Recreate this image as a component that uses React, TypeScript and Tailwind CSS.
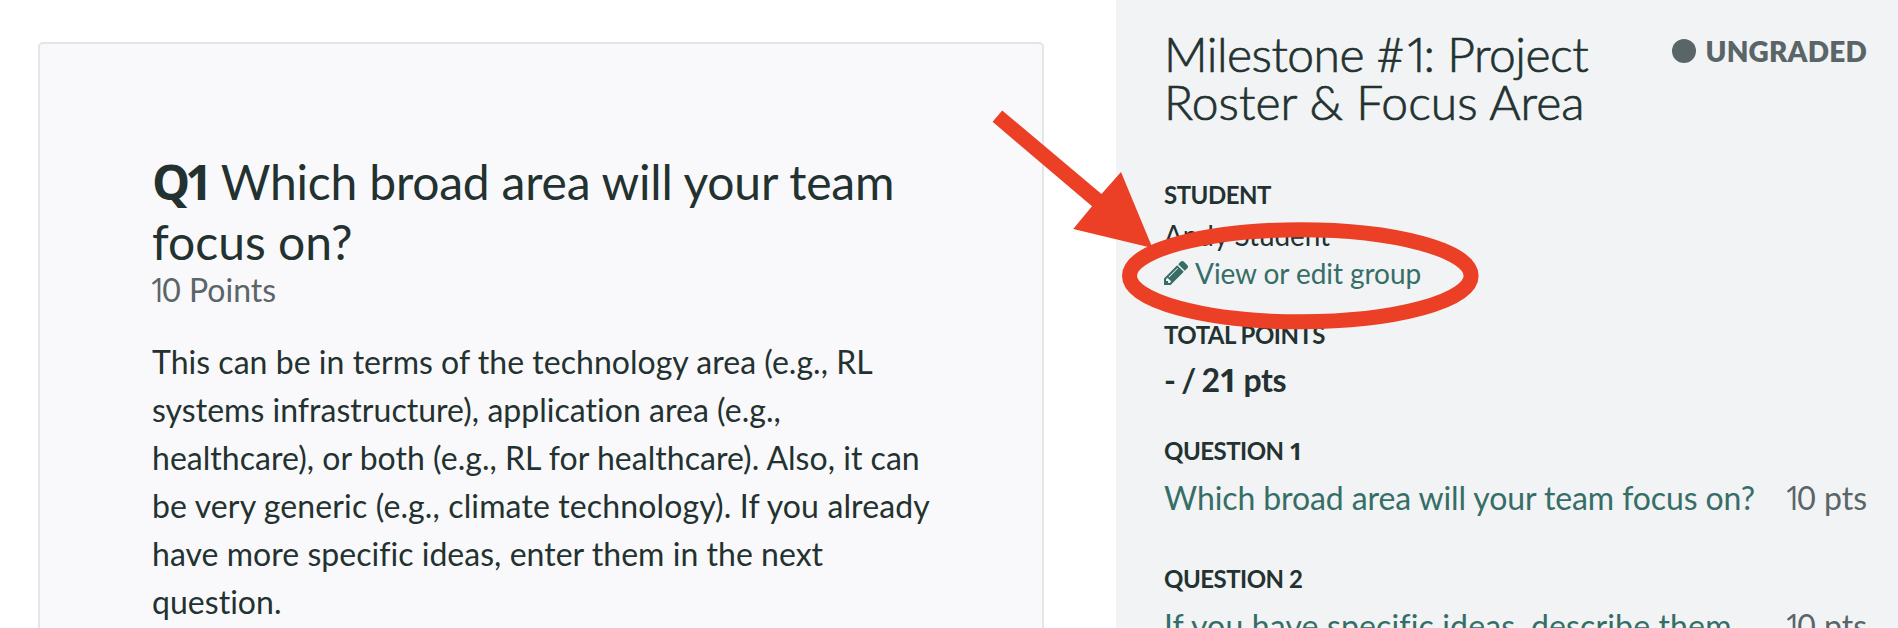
import type { ReactNode } from 'react';

function PencilIcon() {
  return (
    <svg viewBox="0 149 1515 1515" className="size-6 shrink-0" fill="currentColor" aria-hidden="true">
      <path d="M363 1536l91-91-235-235-91 91v107h128v128h107zM886 608q0-22-22-22-10 0-17 7l-542 542q-7 7-7 17 0 22 22 22 10 0 17-7l542-542q7-7 7-17zM832 416l416 416-832 832h-416v-416zM1515 512q0 53-37 90l-166 166-416-416 166-165q36-38 90-38 53 0 91 38l235 234q37 39 37 91z" />
    </svg>
  );
}

/* A footless, tightly set numeral one. */
function One({ className = 'tracking-[-0.16em]' }: { className?: string }) {
  return <span className={`font-['Open_Sans',sans-serif] leading-none ${className}`}>1</span>;
}

function Label({ children }: { children: ReactNode }) {
  return <h2 className="text-2xl leading-8 font-bold tracking-[-0.5px] uppercase">{children}</h2>;
}

function QuestionRow({ number, children }: { number: ReactNode; children: ReactNode }) {
  return (
    <section>
      <Label>Question {number}</Label>
      <div className="mt-[11px] flex justify-between text-[32px] leading-10">
        <a className="whitespace-nowrap text-[#366e67]">{children}</a>
        <span className="whitespace-nowrap text-[#5a6568]">
          <One />0 pts
        </span>
      </div>
    </section>
  );
}

function QuestionCard() {
  return (
    <article className="mt-[42px] ml-[38px] h-[700px] w-[1006px] shrink-0 rounded-[5px] border-2 border-[#e1e6e9] bg-[#f9f9fb] pt-[108px] pl-[112px]">
      <h1 className="text-5xl leading-[60px] whitespace-nowrap">
        <strong className="mr-[13px] font-['Open_Sans',sans-serif] leading-none font-bold tracking-[-5px]">Q1</strong>
        <span className="tracking-[-0.2px]">Which broad area will your team</span>
        <br />
        focus on?
      </h1>
      <p className="-ml-[3px] text-[32px] leading-9 text-[#5a6568]">
        <One />0 Points
      </p>
      <p className="mt-[30px] text-[32px] leading-[48px] tracking-[0.03px] whitespace-nowrap">
        This can be in terms of the technology area (e.g., RL
        <br />
        systems infrastructure), application area (e.g.,
        <br />
        healthcare), or both (e.g., RL for healthcare). Also, it can
        <br />
        <span className="tracking-[0.13px]">be very generic (e.g., climate technology). If you already</span>
        <br />
        have more specific ideas, enter them in the next
        <br />
        question.
      </p>
    </article>
  );
}

function Sidebar() {
  return (
    <aside className="h-[628px] w-[782px] shrink-0 overflow-hidden bg-[#f1f3f5] pt-[30px] pr-[31px] pl-12">
      <header className="flex h-[149px] items-start justify-between">
        <h1 className="text-5xl leading-12 font-light tracking-[-0.5px] whitespace-nowrap [-webkit-text-stroke:0.7px_#233230]">
          Milestone #<One />: Project
          <br />
          <span className="tracking-[0.05px]">Roster &amp; Focus Area</span>
        </h1>
        <div className="mt-px flex items-center gap-[9px] text-[#5a6568]">
          <span className="size-6 rounded-full bg-[#5a6568]" />
          <span className="text-[28px] leading-10 font-extrabold tracking-[0.2px]">UNGRADED</span>
        </div>
      </header>
      <section className="h-[140px]">
        <Label>Student</Label>
        <p className="mt-[5px] text-[28px] leading-[38px] tracking-[-0.1px]">Andy Student</p>
        <a className="flex items-center gap-[7px] text-[28px] leading-[38px] tracking-[-0.07px] text-[#366e67]">
          <PencilIcon />
          View or edit group
        </a>
      </section>
      <section className="mb-[35px]">
        <Label>Total Points</Label>
        <p className="mt-[9px] text-[32px] leading-10 font-bold tracking-[-0.4px]">
          <span className="tracking-[-1.2px]">- / 2</span>
          <One className="tracking-[-0.04em]" /> pts
        </p>
      </section>
      <div className="space-y-[45px]">
        <QuestionRow number={<One />}>
          <span className="tracking-[-0.1px]">Which broad area will your team focus on?</span>
        </QuestionRow>
        <QuestionRow number="2">
          <span className="tracking-[0.14px]">If you have specific ideas, describe them</span>
        </QuestionRow>
      </div>
    </aside>
  );
}

function Annotation() {
  return (
    <svg className="pointer-events-none absolute top-0 left-0" width="1898" height="628" aria-hidden="true">
      <ellipse cx="1300.3" cy="275.8" rx="170.8" ry="46" fill="none" stroke="#eb4026" strokeWidth="15" />
      <path d="M1002.2 110.5L1101.5 194L1121 172L1152.5 248L1073.2 229L1092 206.3L992.6 121.8Z" fill="#eb4026" />
    </svg>
  );
}

export default function App() {
  return (
    <main className="relative flex h-[628px] w-[1898px] justify-between overflow-hidden bg-white font-['Lato',sans-serif] text-[#233230]">
      <QuestionCard />
      <Sidebar />
      <Annotation />
    </main>
  );
}
